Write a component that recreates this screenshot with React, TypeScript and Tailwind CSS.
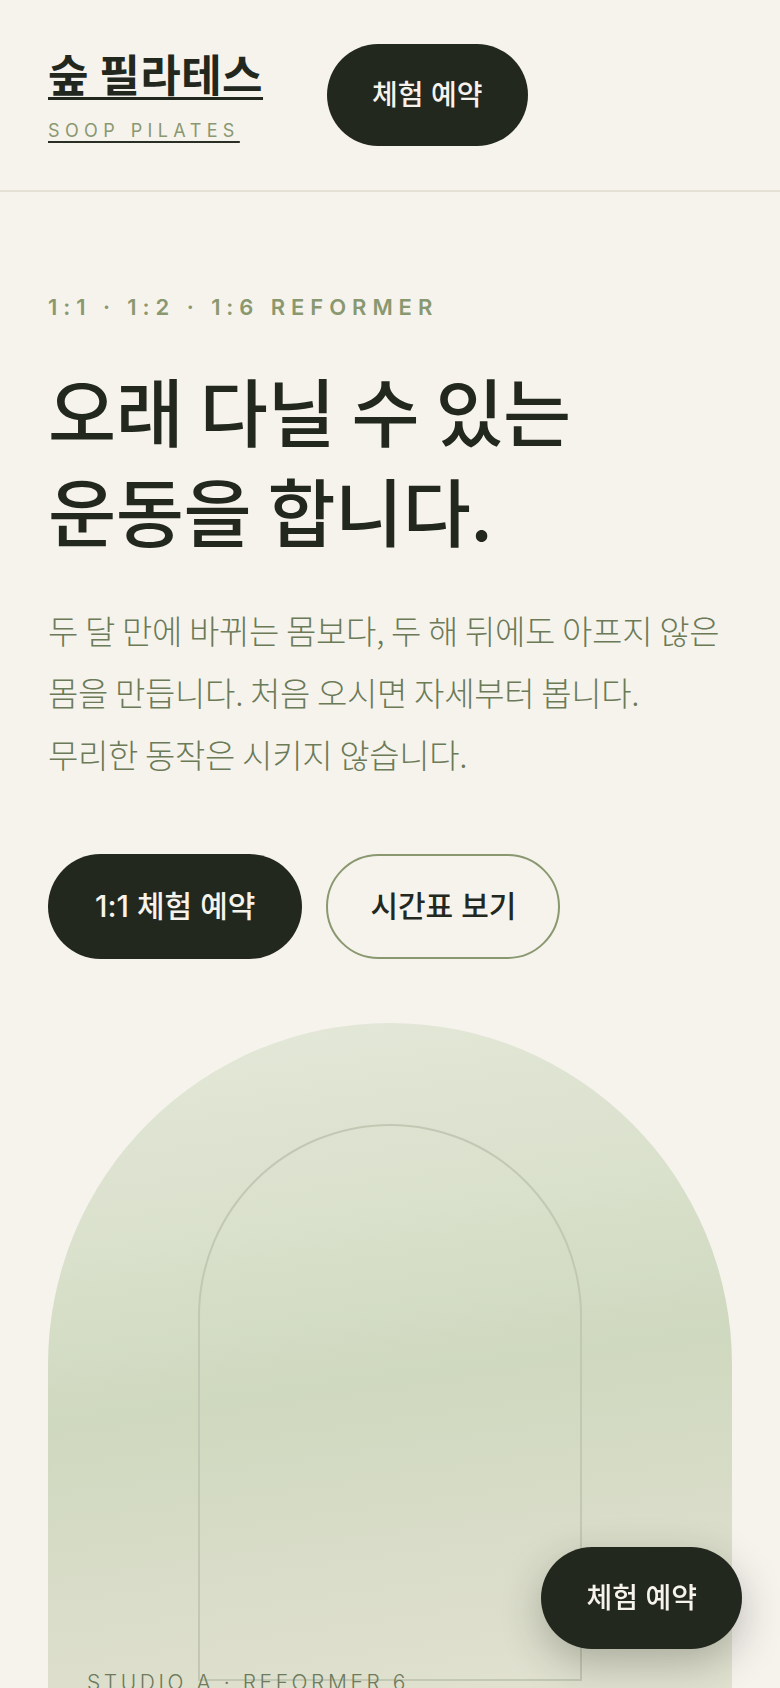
const kr = "font-['Inter','Noto_Sans_CJK_KR',sans-serif]";

function BookButton({ className = "" }: { className?: string }) {
  return (
    <button
      className={`${kr} flex h-[102px] items-center justify-center rounded-full bg-[#23281f] px-[45px] text-[28px] font-medium text-[#f6f3ed] ${className}`}
    >
      체험 예약
    </button>
  );
}

export default function App() {
  return (
    <div className={`${kr} h-screen overflow-hidden bg-[#f6f3ed] text-[#23281f]`}>
      {/* Header */}
      <header className="flex items-center gap-16 border-b-2 border-[#e4e0d4] px-12 py-11">
        <a href="#" className="flex flex-col">
          <span className="font-['Noto_Sans_CJK_KR',sans-serif] text-[44px] font-bold leading-[52px] tracking-[0.01em] underline decoration-[3px] underline-offset-[5px]">
            숲 필라테스
          </span>
          <span className="mt-[20px] text-[18px] leading-[24px] tracking-[0.3em] text-[#8a9870] underline decoration-[#2a2f25] decoration-2 underline-offset-[4px]">
            SOOP PILATES
          </span>
        </a>
        <BookButton />
      </header>

      {/* Hero */}
      <section className="px-12 pt-[100px]">
        <p className="text-[22px] font-semibold leading-[30px] tracking-[0.27em] text-[#8a9870]">
          1:1 · 1:2 · 1:6 REFORMER
        </p>
        <h1 className="mt-[37px] font-['Noto_Sans_CJK_KR',sans-serif] text-[74px] font-medium leading-[100px] tracking-[-0.005em]">
          오래 다닐 수 있는
          <br />
          운동을 합니다.
        </h1>
        <p className="mt-[40px] font-['Noto_Sans_CJK_KR',sans-serif] text-[33px] font-light leading-[62px] tracking-[-0.01em] text-[#6b7a57]">
          두 달 만에 바뀌는 몸보다, 두 해 뒤에도 아프지 않은
          <br />
          몸을 만듭니다. 처음 오시면 자세부터 봅니다.
          <br />
          무리한 동작은 시키지 않습니다.
        </p>

        <div className="mt-[69px] flex gap-6">
          <button className="flex h-[105px] items-center rounded-full bg-[#23281f] px-[47px] text-[30px] font-medium text-[#f6f3ed]">
            1:1 체험 예약
          </button>
          <button className="flex h-[105px] items-center rounded-full border-2 border-[#8a9870] px-[42px] text-[30px] font-medium text-[#23281f]">
            시간표 보기
          </button>
        </div>

        {/* Arch visual */}
        <div className="relative mt-16 h-[860px] rounded-t-full bg-[linear-gradient(172deg,#e4e8d9_0%,#d9e0cb_25%,#cfd9bf_42%,#d8dcc8_60%,#e2e2d1_80%,#e6e3d4_100%)] px-[22%] pt-[101px]">
          <div className="h-[557px] rounded-t-full rounded-b-[10px] border-2 border-[#c2c8b3]" />
          <span className="absolute left-[39px] top-[646px] text-[21px] font-light leading-[28px] tracking-[0.17em] text-[#6e7a5c]">
            STUDIO A · REFORMER 6
          </span>
        </div>
      </section>

      <BookButton className="fixed bottom-[39px] right-[38px] shadow-[0_14px_40px_rgba(35,40,31,0.28)]" />
    </div>
  );
}
